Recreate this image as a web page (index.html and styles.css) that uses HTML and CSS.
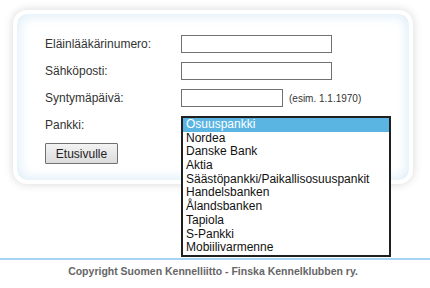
FILE: index.html
```html
<!DOCTYPE html>
<html lang="fi">
<head>
<meta charset="utf-8">
<title>Kirjautuminen</title>
<link rel="stylesheet" href="styles.css">
</head>
<body>
<div class="page">
  <form class="card">
    <div class="form-grid">
      <label class="label" for="eln">Eläinlääkärinumero:</label>
      <div class="field"><input class="input" id="eln" type="text"></div>

      <label class="label" for="email">Sähköposti:</label>
      <div class="field"><input class="input" id="email" type="text"></div>

      <label class="label" for="dob">Syntymäpäivä:</label>
      <div class="field"><input class="input input-short" id="dob" type="text"><span class="hint">(esim. 1.1.1970)</span></div>

      <span class="label">Pankki:</span>
      <div class="field select-field">
        <div class="select-box"></div>
        <ul class="listbox" role="listbox">
          <li class="option selected" role="option">Osuuspankki</li>
          <li class="option" role="option">Nordea</li>
          <li class="option" role="option">Danske Bank</li>
          <li class="option" role="option">Aktia</li>
          <li class="option" role="option">Säästöpankki/Paikallisosuuspankit</li>
          <li class="option" role="option">Handelsbanken</li>
          <li class="option" role="option">Ålandsbanken</li>
          <li class="option" role="option">Tapiola</li>
          <li class="option" role="option">S-Pankki</li>
          <li class="option" role="option">Mobiilivarmenne</li>
        </ul>
      </div>
    </div>
    <button class="button" type="button">Etusivulle</button>
  </form>
</div>
<footer class="footer">
  <p class="copyright">Copyright Suomen Kennelliitto - Finska Kennelklubben ry.</p>
</footer>
</body>
</html>
```

FILE: styles.css
```css
* { box-sizing: border-box; }

html, body {
  margin: 0;
  padding: 0;
  background: #ffffff;
}

body {
  font-family: "Liberation Sans", Arial, sans-serif;
  font-size: 12px;
  color: #333333;
}

.page {
  width: 426px;
  padding-top: 10px;
}

.card {
  width: 400px;
  height: 174px;
  margin: 0 auto;
  border: 4px solid #ffffff;
  border-radius: 14px;
  background: #ffffff;
  box-shadow: 0 0 10px rgba(0, 0, 0, 0.16), inset 0 0 14px #d2e8f7;
  padding: 21px 0 0 28px;
  display: flex;
  flex-direction: column;
  gap: 9px;
}

.form-grid {
  display: grid;
  grid-template-columns: 136px auto;
  grid-auto-rows: 18px;
  row-gap: 9px;
  align-items: center;
}

.label {
  line-height: 18px;
  color: #333333;
}

.field {
  display: flex;
  align-items: center;
  gap: 6px;
  height: 18px;
}

.input {
  width: 151px;
  height: 18px;
  border: 1px solid #707070;
  background: #ffffff;
  padding: 0 2px;
  margin: 0;
  font: inherit;
}

.input-short {
  width: 102px;
}

.hint {
  font-size: 10px;
  color: #333333;
}

.select-field {
  position: relative;
}

.select-box {
  width: 210px;
  height: 18px;
  border: 1px solid #707070;
}

.listbox {
  position: absolute;
  left: 0;
  top: 0;
  width: 210px;
  margin: 0;
  padding: 0;
  list-style: none;
  border: 2px solid #202020;
  background: #ffffff;
  z-index: 2;
}

.option {
  font-size: 12px;
  line-height: 13.7px;
  height: 13.7px;
  padding: 0 3px;
  color: #111111;
  white-space: nowrap;
}

.option.selected {
  background: #5ab5e3;
  color: #ffffff;
}

.button {
  align-self: flex-start;
  width: 73px;
  height: 21px;
  margin: 0;
  padding: 0;
  border: 1px solid #707070;
  border-radius: 1px;
  background: linear-gradient(#f3f3f3, #dcdcdc);
  font-family: "Liberation Sans", Arial, sans-serif;
  font-size: 12px;
  color: #222222;
}

.footer {
  margin-top: 74px;
  border-top: 2px solid #a6d4f2;
}

.copyright {
  width: 426px;
  margin: 0;
  padding-top: 3px;
  text-align: center;
  font-size: 10.5px;
  font-weight: bold;
  color: #666666;
  line-height: 16px;
}
```
